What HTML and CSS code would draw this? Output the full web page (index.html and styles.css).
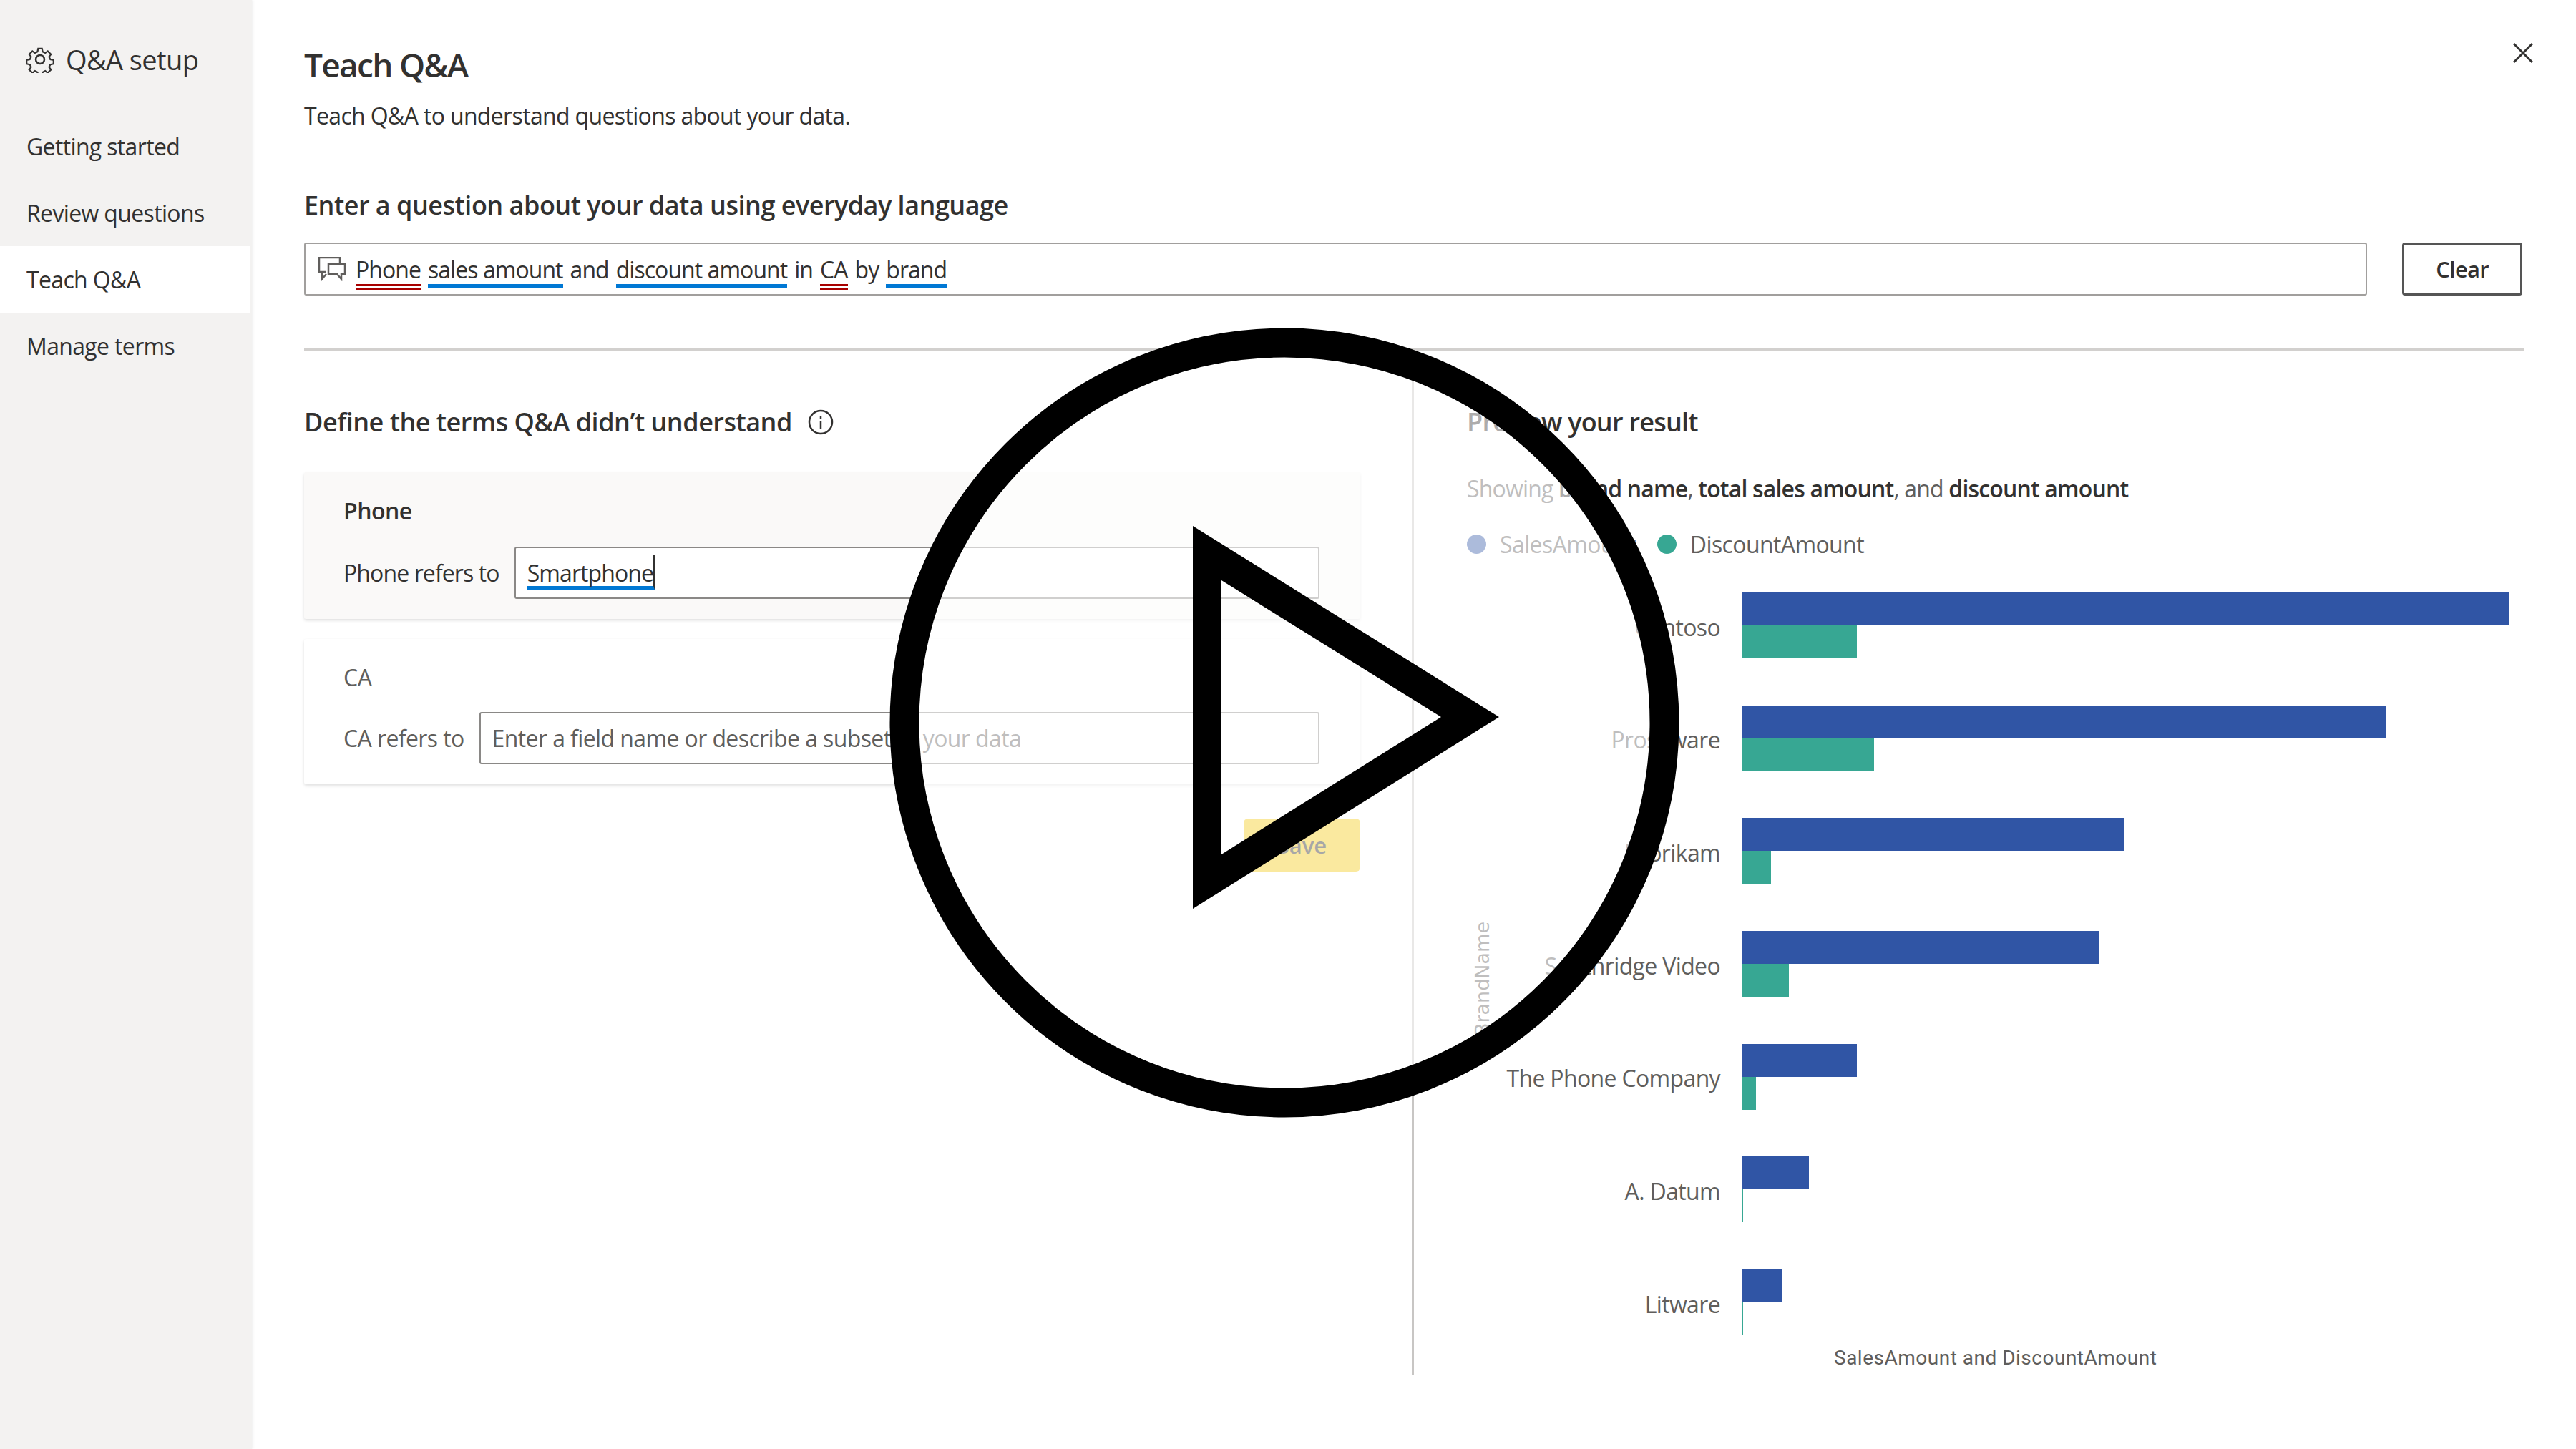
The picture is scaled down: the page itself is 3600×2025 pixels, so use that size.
FILE: index.html
```html
<!DOCTYPE html>
<html lang="en">
<head>
    <meta charset="UTF-8">
    <title>Teach Q&amp;A</title>
    <link rel="stylesheet" href="styles.css">
</head>
<body>
<div class="page">
    <div class="sidebar">
        <div class="side-title">
            <svg class="gear" viewBox="0 0 38 38">
                <path d="M16 2h6l1 5 4 2 4-3 5 5-3 4 2 4 5 1v6l-5 1-2 4 3 4-5 5-4-3-4 2-1 5h-6l-1-5-4-2-4 3-5-5 3-4-2-4-5-1v-6l5-1 2-4-3-4 5-5 4 3 4-2z" transform="translate(2 2) scale(.895)"/>
                <circle cx="19" cy="19" r="6"/>
            </svg>
            <span>Q&amp;A setup</span>
        </div>
        <div class="nav-item">Getting started</div>
        <div class="nav-item">Review questions</div>
        <div class="nav-item active">Teach Q&amp;A</div>
        <div class="nav-item">Manage terms</div>
    </div>

    <div class="main">
        <svg class="close" viewBox="0 0 28 28"><path d="M1 1l26 26M27 1L1 27"/></svg>
        <h1>Teach Q&amp;A</h1>
        <p class="intro">Teach Q&amp;A to understand questions about your data.</p>
        <h2 class="question-label">Enter a question about your data using everyday language</h2>

        <div class="question-row">
            <div class="question-box">
                <svg class="chat" viewBox="0 0 38 34">
                    <path d="M11 21H1V1h29v8"/>
                    <path d="M5 21v10l6-7M14 10h23v14h-5v7l-6-7H14z"/>
                </svg>
                <span class="term red">Phone</span>
                <span class="term blue">sales amount</span>
                <span class="term">and</span>
                <span class="term blue">discount amount</span>
                <span class="term">in</span>
                <span class="term red">CA</span>
                <span class="term">by</span>
                <span class="term blue">brand</span>
            </div>
            <div class="clear-btn">Clear</div>
        </div>

        <hr>

        <div class="columns">
            <div class="define">
                <h2 class="define-title">Define the terms Q&amp;A didn’t understand
                    <svg class="info" viewBox="0 0 36 36">
                        <circle cx="18" cy="18" r="16"/>
                        <path d="M18 16v11M18 9v4"/>
                    </svg>
                </h2>
                <div class="card selected">
                    <div class="card-name strong">Phone</div>
                    <div class="field-row">
                        <span class="field-label">Phone refers to</span>
                        <div class="field"><span class="typed">Smartphone</span></div>
                    </div>
                </div>
                <div class="card">
                    <div class="card-name">CA</div>
                    <div class="field-row">
                        <span class="field-label">CA refers to</span>
                        <div class="field placeholder">Enter a field name or describe a subset of your data</div>
                    </div>
                </div>
                <div class="save-row"><div class="save-btn">Save</div></div>
            </div>

            <div class="preview">
                <h2 class="preview-title">Preview your result</h2>
                <p class="showing">Showing <b>brand name</b>, <b>total sales amount</b>, and <b>discount amount</b></p>
                <div class="legend">
                    <span class="dot sales"></span><span class="legend-text">SalesAmount</span>
                    <span class="dot discount"></span><span class="legend-text">DiscountAmount</span>
                </div>
                <div class="chart">
                    <div class="y-title"><span>BrandName</span></div>
                    <div class="rows">
                        <div class="row">
                            <span class="row-label">Contoso</span>
                            <div class="bars"><div class="bar sales" style="width:1073px"></div><div class="bar discount" style="width:161px"></div></div>
                        </div>
                        <div class="row">
                            <span class="row-label">Proseware</span>
                            <div class="bars"><div class="bar sales" style="width:900px"></div><div class="bar discount" style="width:185px"></div></div>
                        </div>
                        <div class="row">
                            <span class="row-label">Fabrikam</span>
                            <div class="bars"><div class="bar sales" style="width:535px"></div><div class="bar discount" style="width:41px"></div></div>
                        </div>
                        <div class="row">
                            <span class="row-label">Southridge Video</span>
                            <div class="bars"><div class="bar sales" style="width:500px"></div><div class="bar discount" style="width:66px"></div></div>
                        </div>
                        <div class="row">
                            <span class="row-label">The Phone Company</span>
                            <div class="bars"><div class="bar sales" style="width:161px"></div><div class="bar discount" style="width:20px"></div></div>
                        </div>
                        <div class="row">
                            <span class="row-label">A. Datum</span>
                            <div class="bars"><div class="bar sales" style="width:94px"></div><div class="bar discount" style="width:2px"></div></div>
                        </div>
                        <div class="row">
                            <span class="row-label">Litware</span>
                            <div class="bars"><div class="bar sales" style="width:57px"></div><div class="bar discount" style="width:2px"></div></div>
                        </div>
                        <div class="x-title">SalesAmount and DiscountAmount</div>
                    </div>
                </div>
            </div>
        </div>
    </div>

    <!-- video play button sits over the whole page -->
    <svg class="play" viewBox="0 0 3600 2025">
        <circle class="play-fill" cx="1795" cy="1010" r="531"/>
        <circle class="play-ring" cx="1795" cy="1010" r="531"/>
        <path class="play-tri" fill-rule="evenodd" d="M1667 735L2095 1002 1667 1270zM1707 811V1194L2014 1002z"/>
    </svg>
</div>
</body>
</html>
```

FILE: styles.css
```css
html, body {
    margin: 0;
    padding: 0;
    background: #fff;
}

body {
    font-family: "Open Sans", "Noto Sans", sans-serif;
    color: #323130;
    font-size: 32px;
}

h1, h2, p {
    margin: 0;
}

.page {
    position: relative;
    display: flex;
    width: 3600px;
    height: 2025px;
    overflow: hidden;
}

/* left nav */
.sidebar {
    width: 352px;
    flex-shrink: 0;
    background: #f3f2f1;
    box-shadow: 1px 0 4px rgba(0, 0, 0, .08);
}

.side-title {
    display: flex;
    align-items: center;
    height: 159px;
    padding: 7px 0 0 37px;
    font-size: 38px;
    letter-spacing: -.6px;
    box-sizing: border-box;
    margin-bottom: -1px;
}

.side-title span {
    margin-left: 17px;
}

.gear {
    width: 38px;
    height: 38px;
    fill: none;
    stroke: #323130;
    stroke-width: 2.5;
}

.nav-item {
    height: 93px;
    line-height: 93px;
    padding-left: 37px;
    width: 350px;
    box-sizing: border-box;
    letter-spacing: -.65px;
}

.nav-item.active {
    background: #fff;
}

/* main column */
.main {
    position: relative;
    flex: 1;
    padding: 62px 73px 0 73px;
}

.close {
    position: absolute;
    top: 60px;
    right: 60px;
    width: 28px;
    height: 28px;
    fill: none;
    stroke: #323130;
    stroke-width: 3;
}

h1 {
    font-size: 46px;
    font-weight: 600;
    line-height: 56px;
    letter-spacing: -1.7px;
}

.intro {
    margin-top: 23px;
    line-height: 42px;
    letter-spacing: -.65px;
}

h2 {
    font-size: 36px;
    font-weight: 600;
    line-height: 48px;
    letter-spacing: -.5px;
}

.question-label {
    margin-top: 80px;
}

.question-row {
    display: flex;
    gap: 49px;
    margin-top: 28px;
}

.question-box {
    display: flex;
    align-items: center;
    gap: 10px;
    flex: 1;
    height: 74px;
    box-sizing: border-box;
    border: 2px solid #a19f9d;
    border-radius: 3px;
    padding: 0 0 0 18px;
    letter-spacing: -.95px;
}

.chat {
    width: 38px;
    height: 34px;
    margin-right: 4px;
    fill: none;
    stroke: #605e5c;
    stroke-width: 2.5;
}

.term {
    line-height: 40px;
    margin-top: 6px;
    border-bottom: 5px solid transparent;
}

.term.red {
    border-bottom: 8px double #a80000;
    margin-bottom: -3px;
}

.term.blue {
    border-bottom-color: #0078d4;
}

.clear-btn {
    width: 168px;
    height: 74px;
    margin-right: 2px;
    box-sizing: border-box;
    border: 3px solid #555;
    border-radius: 4px;
    text-align: center;
    line-height: 68px;
    font-weight: 600;
    font-size: 31px;
    letter-spacing: -.8px;
}

hr {
    border: 0;
    height: 3px;
    background: #d2d0ce;
    margin: 74px 0 0 0;
}

.columns {
    display: flex;
}

/* define the terms */
.define {
    width: 1476px;
    flex-shrink: 0;
    padding-top: 76px;
}

.define-title {
    display: flex;
    align-items: center;
    gap: 22px;
}

.info {
    width: 36px;
    height: 36px;
    fill: none;
    stroke: #323130;
    stroke-width: 2.5;
}

.card {
    height: 203px;
    box-sizing: border-box;
    padding: 32px 57px 0 55px;
    margin-bottom: 28px;
    background: #fff;
    border-radius: 3px;
    box-shadow: 0 2px 4px rgba(0, 0, 0, .13);
}

.define-title + .card {
    margin-top: 46px;
}

.card.selected {
    height: 205px;
    background: #faf9f8;
}

.card-name {
    line-height: 44px;
    letter-spacing: -.5px;
    color: #605e5c;
}

.card-name.strong {
    font-weight: 600;
    color: #323130;
}

.field-row {
    display: flex;
    align-items: center;
    gap: 21px;
    margin-top: 26px;
    letter-spacing: -.6px;
}

.field-label {
    color: #605e5c;
}

.selected .field-row {
    margin-top: 28px;
    letter-spacing: -.9px;
}

.selected .field-label {
    color: #323130;
}

.field {
    flex: 1;
    height: 73px;
    box-sizing: border-box;
    border: 2px solid #8a8886;
    border-radius: 3px;
    background: #fff;
    padding: 0 16px;
    line-height: 69px;
}

.typed {
    display: inline-block;
    line-height: 36px;
    padding-top: 8px;
    border-bottom: 5px solid #0078d4;
    border-right: 2px solid #323130;
}

.placeholder {
    color: #605e5c;
}

.save-row {
    display: flex;
    justify-content: flex-end;
    margin-top: 48px;
}

.save-btn {
    width: 163px;
    height: 74px;
    border-radius: 6px;
    background: #f2c811;
    color: #252423;
    text-align: center;
    line-height: 74px;
    font-weight: 600;
    font-size: 31px;
}

/* preview side */
.preview {
    margin-left: 72px;
    flex: 1;
    padding: 76px 0 0 74px;
    border-left: 3px solid #c8c6c4;
    height: 1355px;
}

.preview-title {
    letter-spacing: -.75px;
}

.showing {
    margin-top: 47px;
    line-height: 44px;
    letter-spacing: -.83px;
    color: #605e5c;
}

.showing b {
    font-weight: 600;
    color: #323130;
}

.legend {
    display: flex;
    align-items: center;
    margin-top: 33px;
    height: 44px;
    letter-spacing: -.6px;
    color: #605e5c;
}

.dot {
    width: 27px;
    height: 27px;
    border-radius: 50%;
    margin-right: 19px;
}

.legend-text {
    margin-right: 30px;
}

.sales {
    background: #3055a5;
}

.discount {
    background: #37a793;
}

.chart {
    display: flex;
    margin-top: 46px;
}

.y-title {
    width: 30px;
    display: flex;
    justify-content: center;
    align-items: flex-end;
    height: 620px;
}

.y-title span {
    margin-left: 12px;
    writing-mode: vertical-rl;
    transform: rotate(180deg);
    font-size: 27px;
    color: #605e5c;
    white-space: nowrap;
    font-family: "DejaVu Sans", sans-serif;
}

.rows {
    flex: 1;
}

.row {
    display: flex;
    align-items: center;
    height: 92px;
    margin-bottom: 65.7px;
}

.row:nth-child(7) {
    margin-bottom: 0;
}

.row-label {
    width: 324px;
    margin-right: 30px;
    padding-top: 4px;
    text-align: right;
    flex-shrink: 0;
    letter-spacing: -.65px;
    color: #605e5c;
}

.bar {
    height: 46px;
}

.x-title {
    margin: 14px 0 0 483px;
    font-family: "Roboto", sans-serif;
    font-size: 28px;
    line-height: 36px;
    letter-spacing: .5px;
    color: #605e5c;
}

/* play overlay */
.play {
    position: absolute;
    left: 0;
    top: 0;
    width: 3600px;
    height: 2025px;
    pointer-events: none;
}

.play-fill {
    fill: rgba(255, 255, 255, .6);
}

.play-ring {
    fill: none;
    stroke: #000;
    stroke-width: 41;
}

.play-tri {
    fill: #000;
}
```
